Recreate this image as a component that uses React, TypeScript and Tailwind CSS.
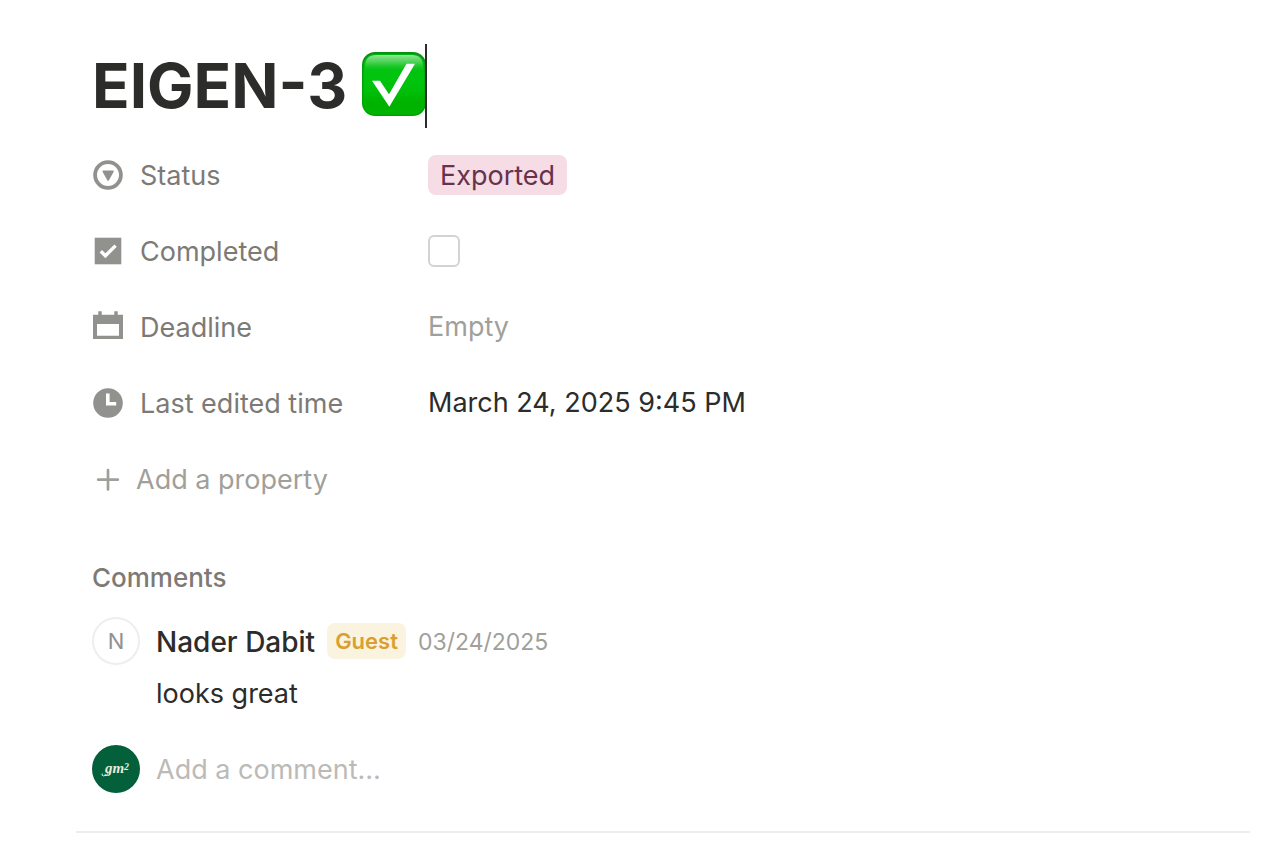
import type { ReactNode } from "react";

function StatusIcon() {
  return (
    <svg viewBox="-1 -1 32 32" className="size-8" fill="none" aria-hidden="true">
      <circle cx="15" cy="15" r="12.9" stroke="currentColor" strokeWidth="3.8" />
      <path
        d="M10.2 10.600h9.900a.7.7 0 0 1 .6 1.100l-4.900 8.700a.8.8 0 0 1-1.400 0L9.600 11.700a.7.7 0 0 1 .6-1.100z"
        fill="currentColor"
      />
    </svg>
  );
}

function CompletedIcon() {
  return (
    <svg viewBox="-1 -1 32 32" className="size-8" fill="none" aria-hidden="true">
      <path d="M1.700 1.700h26.600v26.600H1.700z" fill="currentColor" />
      <path d="M7.800 15.300l4.600 4.500 10.200-10.200" stroke="white" strokeWidth="3.400" />
    </svg>
  );
}

function DeadlineIcon() {
  return (
    <svg viewBox="-1 -1 32 32" className="size-8" fill="currentColor" aria-hidden="true">
      <path
        fillRule="evenodd"
        d="M5.300-.700h3.400v3.500h12.600v-3.500h3.400v3.500H30V27H0V2.800h5.300zM4 12v11.800h22V12z"
      />
    </svg>
  );
}

function ClockIcon() {
  return (
    <svg viewBox="-1 -1 32 32" className="size-8" fill="none" aria-hidden="true">
      <circle cx="15" cy="15" r="14.800" fill="currentColor" />
      <path d="M14.800 5.500v10.300h8.400" stroke="white" strokeWidth="3.600" />
    </svg>
  );
}

function PlusIcon() {
  return (
    <svg viewBox="-1 -1 32 32" className="size-8" fill="none" aria-hidden="true">
      <path d="M15 6v19.500M5.200 15.700h19.600" stroke="currentColor" strokeWidth="2.700" strokeLinecap="round" />
    </svg>
  );
}

function CheckEmoji() {
  return (
    <svg viewBox="0 0 64 64" className="size-16" role="img" aria-label="Done">
      <defs>
        <linearGradient id="face" x1="0" y1="0" x2="0" y2="1">
          <stop offset="0" stopColor="#00b40c" />
          <stop offset="0.35" stopColor="#00c50e" />
          <stop offset="0.6" stopColor="#00c00a" />
          <stop offset="0.8" stopColor="#00b200" />
          <stop offset="1" stopColor="#00b400" />
        </linearGradient>
        <linearGradient id="gloss" x1="0" y1="0" x2="0" y2="1">
          <stop offset="0" stopColor="#8fe596" />
          <stop offset="0.4" stopColor="#5cd965" stopOpacity="0.8" />
          <stop offset="1" stopColor="#00c50e" stopOpacity="0" />
        </linearGradient>
        <linearGradient id="edge" x1="0" y1="0" x2="0" y2="1">
          <stop offset="0" stopColor="#0a8f17" />
          <stop offset="0.6" stopColor="#00a508" />
          <stop offset="1" stopColor="#00a400" />
        </linearGradient>
      </defs>
      <rect width="64" height="64" rx="13" fill="url(#edge)" />
      <rect x="1.500" y="2" width="61" height="60.500" rx="11.500" fill="url(#face)" />
      <path d="M3 21v-7Q3.500 3 14 3h36q10.500 0 11 11v7z" fill="url(#gloss)" />
      <path d="M10 28.700h8l9 13.500L44.500 11.700h8.500L27.300 54.800z" fill="white" />
    </svg>
  );
}

function MonogramAvatar() {
  return (
    <svg viewBox="0 0 48 48" className="size-12 shrink-0" role="img" aria-label="gm²">
      <circle cx="24" cy="24" r="24" fill="#045f3b" />
      <path d="M16.500 28q-2 3.200-5 2.900-2.400-.4-1.500-2" fill="none" stroke="#e9ecd9" strokeLinecap="round" />
      <text x="13" y="28" fill="#e9ecd9" className="font-['Liberation_Serif',serif] text-[15px] font-bold italic">
        gm
      </text>
      <text x="32" y="25" fill="#e9ecd9" className="font-['Liberation_Serif',serif] text-[10px] font-bold italic">
        2
      </text>
    </svg>
  );
}

function Property({ icon, label, htmlFor, children }: {
  icon: ReactNode;
  label: string;
  htmlFor?: string;
  children: ReactNode;
}) {
  const name = (
    <>
      <span className="text-[#91918e]">{icon}</span>
      <span className="pt-0.5">{label}</span>
    </>
  );
  return (
    <div className="flex h-[76px] items-center">
      {htmlFor ? (
        <label htmlFor={htmlFor} className="flex w-[336px] shrink-0 items-center gap-4 text-[#7d7a75]">
          {name}
        </label>
      ) : (
        <div className="flex w-[336px] shrink-0 items-center gap-4 text-[#7d7a75]">{name}</div>
      )}
      {children}
    </div>
  );
}

export default function App() {
  return (
    <main className="min-h-screen bg-white pt-11 pr-[22px] pl-[76px] font-['Inter','Liberation_Sans',sans-serif] text-[27px] leading-9 text-[#2c2c2b]">
      <div className="border-b-2 border-[#ededec] pb-[38px] pl-4">
        <h1 className="flex h-[84px] items-center text-[62px] font-bold">
          <span>EIGEN-3</span>
          <span className="ml-[15px] pb-1">
            <CheckEmoji />
          </span>
          <span className="-ml-px h-full w-0.5 bg-[#2c2c2b]" />
        </h1>

        <section aria-label="Properties" className="pt-[9px]">
          <Property icon={<StatusIcon />} label="Status">
            <span className="rounded-lg bg-[#f5dce5] px-3 pt-[3px] pb-px text-[#69314c]">Exported</span>
          </Property>
          <Property icon={<CompletedIcon />} label="Completed" htmlFor="completed">
            <input
              id="completed"
              type="checkbox"
              className="size-8 appearance-none rounded-md border-2 border-[#d3d3cf] bg-white checked:bg-[#2383e2]"
            />
          </Property>
          <Property icon={<DeadlineIcon />} label="Deadline">
            <span className="text-[#a19f9a]">Empty</span>
          </Property>
          <Property icon={<ClockIcon />} label="Last edited time">
            <time dateTime="2025-03-24T21:45">March 24, 2025 9:45 PM</time>
          </Property>
          <button type="button" className="flex h-[76px] items-center gap-3 text-[#a19f9a]">
            <PlusIcon />
            <span className="pt-0.5">Add a property</span>
          </button>
        </section>

        <section aria-labelledby="comments-title" className="pt-[43px]">
          <h2 id="comments-title" className="text-[26px] leading-9 font-medium text-[#7d7a75]">
            Comments
          </h2>
          <article className="mt-[21px]">
            <header className="flex h-12 items-center">
              <span className="flex size-12 items-center justify-center rounded-full border-2 border-[#eeeeed] text-[22px] text-[#91918e]">
                N
              </span>
              <span className="ml-4 pt-0.5 text-[28px] font-medium">Nader Dabit</span>
              <span className="ml-3 rounded-lg bg-[#faf3e0] px-2 text-[22px] font-semibold text-[#d9a02f]">
                Guest
              </span>
              <time dateTime="2025-03-24" className="ml-3 pt-0.5 text-[23px] text-[#a19f9a]">
                03/24/2025
              </time>
            </header>
            <p className="mt-[11px] ml-16">looks great</p>
          </article>
          <div className="mt-[33px] flex h-12 items-center gap-4">
            <MonogramAvatar />
            <input
              type="text"
              aria-label="Add a comment"
              placeholder="Add a comment…"
              className="min-w-0 flex-1 bg-transparent pt-0.5 outline-none placeholder:text-[#bcbab6]"
            />
          </div>
        </section>
      </div>
    </main>
  );
}
